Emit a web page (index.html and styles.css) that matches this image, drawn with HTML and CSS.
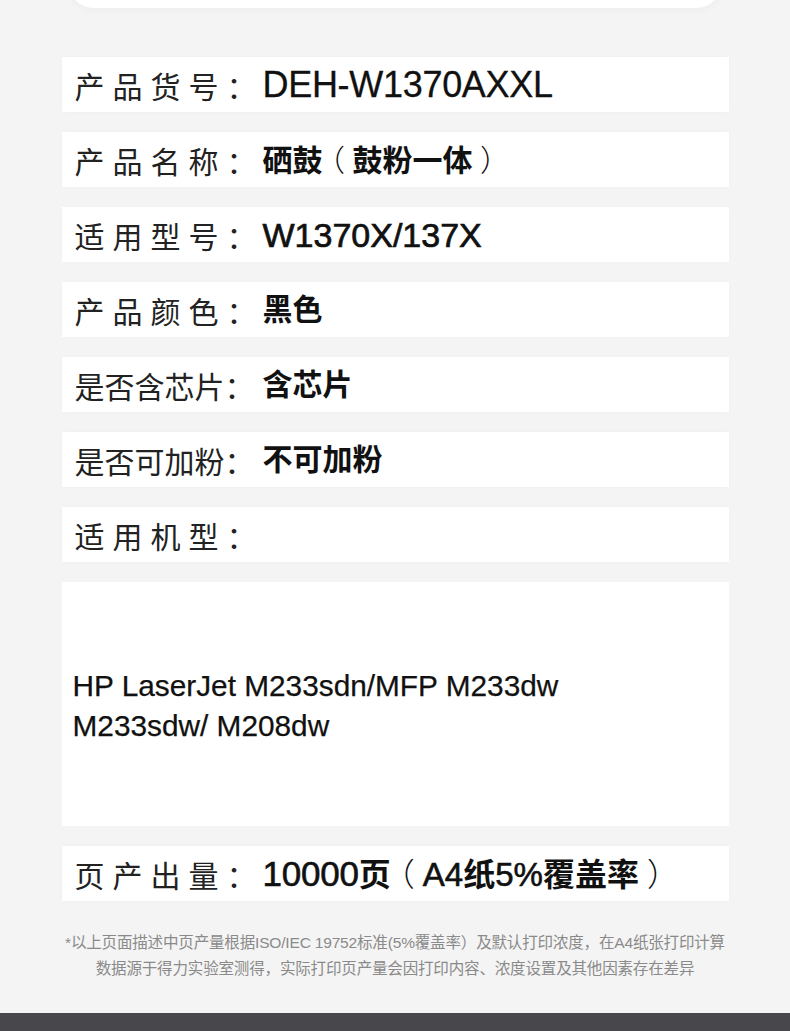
FILE: index.html
```html
<!DOCTYPE html>
<html lang="zh-CN">
<head>
<meta charset="utf-8">
<title>产品参数</title>
<link rel="stylesheet" href="styles.css">
</head>
<body>
<div class="page">
  <div class="top-card"></div>
  <div class="specs">
    <div class="row"><span class="label spaced">产品货号：</span><span class="value latin narrow">DEH-W1370AXXL</span></div>
    <div class="row"><span class="label spaced">产品名称：</span><span class="value">硒鼓<span class="paren">（</span>鼓粉一体<span class="paren">）</span></span></div>
    <div class="row"><span class="label spaced">适用型号：</span><span class="value latin">W1370X/137X</span></div>
    <div class="row"><span class="label spaced">产品颜色：</span><span class="value">黑色</span></div>
    <div class="row"><span class="label">是否含芯片：</span><span class="value">含芯片</span></div>
    <div class="row"><span class="label">是否可加粉：</span><span class="value">不可加粉</span></div>
    <div class="row"><span class="label spaced">适用机型：</span></div>
    <div class="models">
      <p class="models-text">HP LaserJet M233sdn/MFP M233dw<br>M233sdw/ M208dw</p>
    </div>
    <div class="row"><span class="label spaced">页产出量：</span><span class="value yield"><span class="num big">10000</span>页<span class="paren">（</span><span class="num">A4</span>纸<span class="num">5%</span>覆盖率<span class="paren">）</span></span></div>
  </div>
  <p class="note">*以上页面描述中页产量根据ISO/IEC 19752标准(5%覆盖率）及默认打印浓度，在A4纸张打印计算<br>数据源于得力实验室测得，实际打印页产量会因打印内容、浓度设置及其他因素存在差异</p>
  <div class="footer-bar"></div>
</div>
</body>
</html>
```
FILE: styles.css
```css
* {
  box-sizing: border-box;
}

html, body {
  margin: 0;
  padding: 0;
  background: #f4f4f4;
}

body {
  font-family: "Liberation Sans", "Noto Sans CJK SC", sans-serif;
  color: #111;
  overflow: hidden;
}

.page {
  width: 790px;
  display: flex;
  flex-direction: column;
  align-items: center;
}

.top-card {
  width: 654px;
  height: 40px;
  margin-top: -32px;
  background: #fff;
  border-radius: 0 0 26px 26px;
  box-shadow: 0 2px 8px rgba(0, 0, 0, 0.03);
}

.specs {
  margin-top: 49px;
  width: 667px;
  display: flex;
  flex-direction: column;
  gap: 20px;
}

.row {
  height: 55px;
  background: #fff;
  display: flex;
  align-items: center;
  padding-left: 13px;
  box-shadow: 0 0 4px rgba(0, 0, 0, 0.02);
}

.label {
  width: 188px;
  flex: none;
  font-family: "Noto Sans CJK SC", sans-serif;
  font-weight: 400;
  font-size: 30px;
  line-height: 1;
  color: #222;
  white-space: nowrap;
}

.label.spaced {
  letter-spacing: 8px;
}

.value {
  font-family: "Liberation Sans", "Noto Sans CJK SC", sans-serif;
  font-weight: 700;
  font-size: 30px;
  line-height: 1;
  color: #111;
  white-space: nowrap;
}

.value .paren {
  font-family: "Noto Sans CJK SC", sans-serif;
  font-weight: 300;
  font-feature-settings: "halt";
  margin: 0 0.25em;
}

.value.latin {
  font-weight: 400;
  font-size: 34px;
  -webkit-text-stroke: 0.7px #111;
}

.value.narrow {
  font-size: 36px;
  -webkit-text-stroke: 0.3px #111;
  letter-spacing: -0.3px;
}

.value.yield {
  font-size: 32px;
}

.value.yield .num {
  font-family: "Liberation Sans", sans-serif;
  font-weight: 400;
  font-size: 33px;
  -webkit-text-stroke: 0.6px #111;
}

.value.yield .num.big {
  font-size: 35px;
  letter-spacing: -0.2px;
}

.models {
  height: 244px;
  background: #fff;
  display: flex;
  align-items: center;
  padding-left: 11px;
}

.models-text {
  margin: 4px 0 0;
  font-family: "Liberation Sans", sans-serif;
  font-size: 29.8px;
  line-height: 40px;
  color: #111;
  -webkit-text-stroke: 0.25px #111;
}

.note {
  margin: 29px 0 0;
  width: 790px;
  text-align: center;
  font-family: "Liberation Sans", "Noto Sans CJK SC", sans-serif;
  font-size: 15.55px;
  line-height: 26px;
  color: #8a8a8a;
  letter-spacing: -0.2px;
}

.footer-bar {
  margin-top: 31px;
  width: 790px;
  height: 18px;
  background: #48484c;
}
```
